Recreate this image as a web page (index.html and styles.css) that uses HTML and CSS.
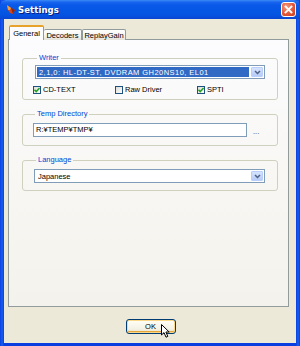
FILE: index.html
```html
<!DOCTYPE html>
<html>
<head>
<meta charset="utf-8">
<link rel="stylesheet" href="styles.css">
</head>
<body>
<div class="window">
  <div class="titlebar">
    <svg class="app-icon" width="10" height="11" viewBox="0 0 10 11">
      <path d="M1 1 L5 4 L9 6 L7 10 L4 9 L2 6 Z" fill="#d4451c"/>
      <path d="M1 1 L5 4 L4 6 L2 6 Z" fill="#f3a03a"/>
      <path d="M5 4 L9 6 L7 10 Z" fill="#8c2a10"/>
    </svg>
    <span class="title">Settings</span>
    <div class="close">
      <svg width="15" height="15" viewBox="0 0 15 15">
        <path d="M4.5 4.5 L10.5 10.5 M10.5 4.5 L4.5 10.5" stroke="#fff" stroke-width="1.8" stroke-linecap="square"/>
      </svg>
    </div>
  </div>
  <div class="client">
    <div class="tabs">
      <div class="tab active">General</div>
      <div class="tab t2">Decoders</div>
      <div class="tab t3">ReplayGain</div>
    </div>
    <div class="panel">
      <fieldset class="group writer">
        <legend>Writer</legend>
        <div class="combo">
          <span class="combo-text sel">2,1,0: HL-DT-ST, DVDRAM GH20NS10, EL01</span>
          <span class="drop"><svg width="7" height="5" viewBox="0 0 7 5"><path d="M1 1 L3.5 3.5 L6 1" fill="none" stroke="#4d6185" stroke-width="1.5"/></svg></span>
        </div>
        <div class="checks">
          <div class="check"><span class="box"><svg width="8" height="8" viewBox="0 0 8 8"><path d="M1.5 3.8 L3.2 5.6 L6.6 1.9" fill="none" stroke="#21a121" stroke-width="1.5"/></svg></span>CD-TEXT</div>
          <div class="check"><span class="box"></span>Raw Driver</div>
          <div class="check"><span class="box"><svg width="8" height="8" viewBox="0 0 8 8"><path d="M1.5 3.8 L3.2 5.6 L6.6 1.9" fill="none" stroke="#21a121" stroke-width="1.5"/></svg></span>SPTI</div>
        </div>
      </fieldset>
      <fieldset class="group temp">
        <legend>Temp Directory</legend>
        <div class="row">
          <div class="input">R:¥TEMP¥TMP¥</div>
          <span class="dots">...</span>
        </div>
      </fieldset>
      <fieldset class="group lang">
        <legend>Language</legend>
        <div class="combo">
          <span class="combo-text">Japanese</span>
          <span class="drop"><svg width="7" height="5" viewBox="0 0 7 5"><path d="M1 1 L3.5 3.5 L6 1" fill="none" stroke="#4d6185" stroke-width="1.5"/></svg></span>
        </div>
      </fieldset>
    </div>
    <div class="footer">
      <div class="ok">OK</div>
    </div>
  </div>
  <svg class="cursor" width="10" height="15" viewBox="0 0 10 15">
    <path d="M0.5 0.5 L0.5 11 L3 8.6 L5 13.2 L6.8 12.4 L4.9 8 L8.2 8 Z" fill="#fff" stroke="#000" stroke-width="1" stroke-linejoin="miter"/>
  </svg>
</div>
</body>
</html>
```
FILE: styles.css
```css
html, body {
  margin: 0;
  padding: 0;
  background: #fff;
}
.window {
  position: relative;
  width: 300px;
  height: 346px;
  box-sizing: border-box;
  display: flex;
  flex-direction: column;
  background: linear-gradient(to right, #0a3ee0 0, #1660ee 2px, #0a3ee0 4px, #0a3ee0 296px, #1660ee 298px, #0a3ee0 300px);
  padding: 0 4px 3px 4px;
  font-family: "Liberation Sans", Arial, sans-serif;
  font-size: 7.5px;
  color: #000;
  overflow: hidden;
}
.titlebar {
  height: 19px;
  margin: 0 -4px;
  display: flex;
  align-items: center;
  padding: 0 3px 0 6px;
  background: linear-gradient(to bottom, #3c8cf6 0, #1a66ee 2px, #0a58e8 5px, #0556e4 12px, #0550df 16px, #0a45d0 19px);
  border-radius: 6px 6px 0 0;
}
.app-icon {
  flex: none;
  margin-right: 2px;
}
.title {
  font-family: "DejaVu Sans", sans-serif;
  font-weight: bold;
  font-size: 8.5px;
  color: #fff;
  text-shadow: 1px 1px 0 #0a1f80;
  letter-spacing: 0.1px;
  flex: 1;
}
.close {
  width: 15px;
  height: 15px;
  box-sizing: border-box;
  border: 1px solid #fff;
  border-radius: 3px;
  background: radial-gradient(circle at 35% 30%, #f39b7d 0, #e2583a 55%, #c13d1c 100%);
  display: flex;
  margin-right: 1px;
}
.close svg {
  margin: -1px;
}
.client {
  flex: 1;
  background: #ece9d8;
  display: flex;
  flex-direction: column;
  padding: 7px 7px 0 4px;
}
.tabs {
  display: flex;
  align-items: flex-end;
  height: 14px;
  margin-bottom: -1px;
  padding-left: 1px;
  position: relative;
  z-index: 1;
}
.tab {
  height: 11px;
  box-sizing: border-box;
  border: 1px solid #919b9c;
  border-bottom: none;
  border-radius: 2px 2px 0 0;
  background: linear-gradient(to bottom, #ffffff, #f3f3ef 60%, #e4e2d8);
  display: flex;
  align-items: center;
  justify-content: center;
  line-height: 9px;
  padding-top: 1px;
}
.tab.active {
  width: 35px;
  height: 15px;
  background: #fcfcfe;
  border-top: 2px solid #ffc83c;
  border-color: #e6a22a #919b9c #919b9c #919b9c;
  border-bottom: none;
  padding-top: 0;
}
.tab.t2 {
  width: 38px;
  border-left: none;
}
.tab.t3 {
  width: 44px;
  border-left: 1px solid #919b9c;
}
.panel {
  height: 268px;
  box-sizing: border-box;
  border: 1px solid #919b9c;
  background: linear-gradient(to bottom, #fcfcfe 0, #f7f6f2 60%, #f3f2ec 100%);
  padding: 13px 10px 0 13px;
  display: flex;
  flex-direction: column;
  gap: 9px;
}
.group {
  margin: 0;
  border: 1px solid #d0d0bf;
  border-radius: 3px;
  padding: 2px 12px 0 12px;
  min-width: 0;
}
.group legend {
  color: #0046d5;
  font-size: 7.5px;
  line-height: 10px;
  padding: 0 2px;
  margin-left: 2px;
}
.combo {
  height: 14px;
  box-sizing: border-box;
  border: 1px solid #7f9db9;
  background: #fff;
  display: flex;
  align-items: stretch;
  padding: 1px;
}
.combo-text {
  flex: 1;
  display: flex;
  align-items: center;
  padding-left: 2px;
  white-space: nowrap;
  overflow: hidden;
}
.combo-text.sel {
  background: #316ac5;
  color: #fff;
  margin-right: 2px;
  letter-spacing: 0.45px;
}
.drop {
  width: 12px;
  flex: none;
  box-sizing: border-box;
  border: 1px solid #b9cefb;
  border-radius: 1px;
  background: linear-gradient(to bottom, #d6e3fd, #b6cbf6);
  display: flex;
  align-items: center;
  justify-content: center;
}
.checks {
  display: flex;
  margin: 6px 0 5px -2px;
}
.check {
  width: 82px;
  flex: none;
  display: flex;
  align-items: center;
  height: 9px;
  line-height: 9px;
}
.check:last-child {
  width: auto;
}
.box {
  width: 8px;
  height: 8px;
  box-sizing: border-box;
  border: 1px solid #1c5180;
  background: linear-gradient(135deg, #dcdcd7, #fdfdfd);
  margin-right: 2px;
  display: flex;
}
.box svg {
  margin: -1px;
}
.temp {
  padding: 4px 5px 8px 10px;
}
.row {
  display: flex;
  align-items: center;
}
.input {
  width: 214px;
  height: 14px;
  box-sizing: border-box;
  border: 1px solid #7f9db9;
  background: #fff;
  padding-left: 2px;
  line-height: 12px;
}
.dots {
  margin-left: 6px;
  padding-top: 3px;
  color: #333;
}
.lang {
  padding: 4px 12px 7px 11px;
}
.footer {
  flex: 1;
  display: flex;
  justify-content: center;
  align-items: flex-start;
  padding-top: 12px;
}
.ok {
  width: 50px;
  height: 15px;
  box-sizing: border-box;
  border: 1px solid #003c74;
  border-radius: 3px;
  background: linear-gradient(to bottom, #fffff6, #f4f2e6 70%, #e3dcc0);
  box-shadow: inset 0 0 0 1px #f9d88a, inset 0 -1px 0 1px #e5a53a;
  display: flex;
  align-items: center;
  justify-content: center;
  margin-left: 4px;
}
.cursor {
  position: absolute;
  left: 161px;
  top: 324px;
}
```
